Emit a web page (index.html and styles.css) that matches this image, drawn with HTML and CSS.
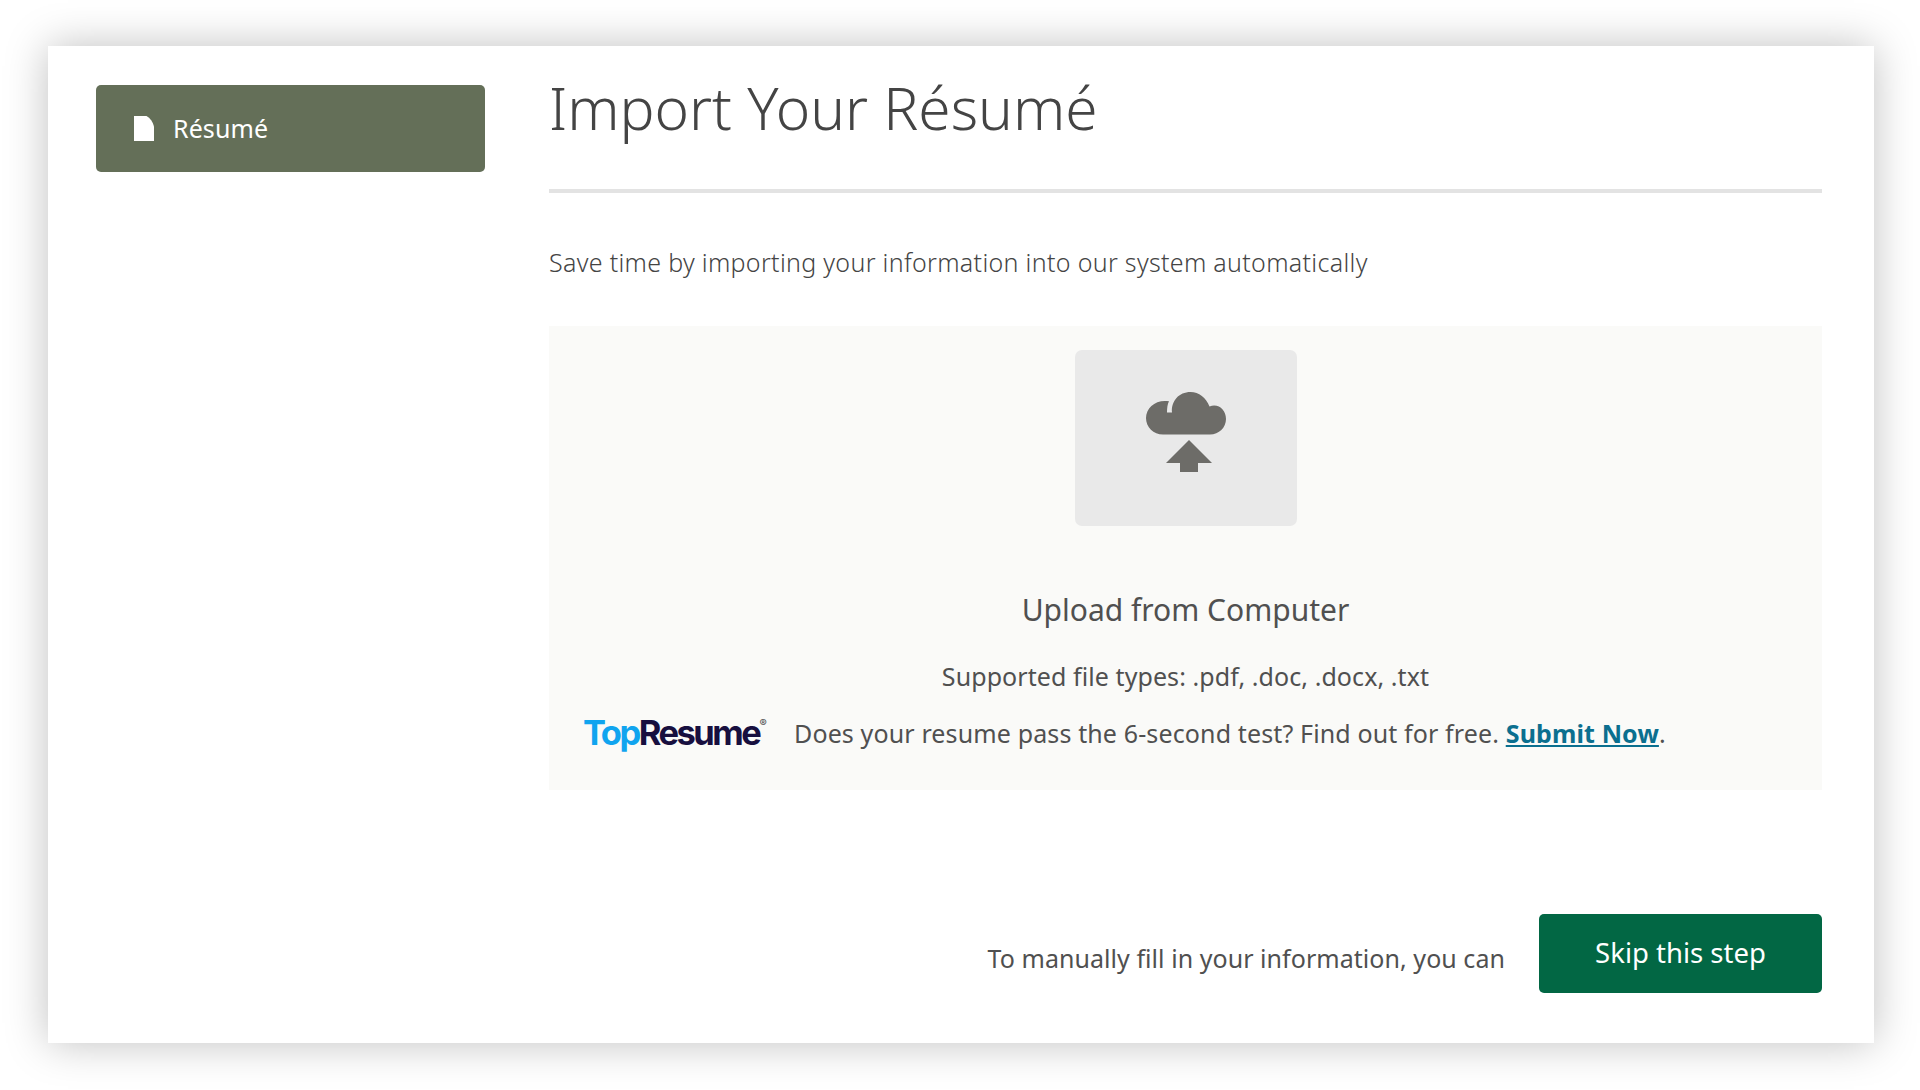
FILE: index.html
```html
<!DOCTYPE html>
<html lang="en">
<head>
<meta charset="utf-8">
<title>Import Your Résumé</title>
<link rel="stylesheet" href="styles.css">
</head>
<body>
<div class="card">
  <aside class="sidebar">
    <a class="nav-item">
      <svg class="doc-icon" viewBox="0 0 20 25" width="20" height="25"><path d="M0 0H12.500C16 2 19 6 20 10.500V25H0Z" fill="#fff"/></svg>
      <span class="nav-label">Résumé</span>
    </a>
  </aside>
  <main class="main">
    <h1 class="title">Import Your Résumé</h1>
    <p class="lead">Save time by importing your information into our system automatically</p>
    <section class="panel">
      <div class="upload-box">
        <svg class="upload-icon" viewBox="0 0 80 80" width="80" height="80">
          <path d="M21 9C9 8 0 16 0 26C0 35 7.500 42.500 17 42.500H64C73 42.500 80 35.500 80 27C80 18 72.500 11 63.500 14.500C60 5.500 53 0 44.500 0C33 0 25 9 26 20.500H21C21 16.500 21.500 12 23 9.300Z" fill="#6d6c68"/>
          <path d="M43 48L66 71H52V80H34V71H20Z" fill="#6d6c68"/>
        </svg>
      </div>
      <h2 class="upload-title">Upload from Computer</h2>
      <p class="types">Supported file types: .pdf, .doc, .docx, .txt</p>
      <div class="promo">
        <span class="logo"><span class="logo-top">Top</span><span class="logo-resume">Resume</span><sup class="logo-reg">®</sup></span>
        <span class="promo-text">Does your resume pass the 6-second test? Find out for free. <a class="promo-link">Submit Now</a>.</span>
      </div>
    </section>
    <footer class="actions">
      <span class="manual">To manually fill in your information, you can</span>
      <a class="skip">Skip this step</a>
    </footer>
  </main>
</div>
</body>
</html>
```
FILE: styles.css
```css
* { box-sizing: border-box; }
html, body { margin: 0; height: 100%; background: #fff; }
body {
  padding: 46px 46px 47px 48px;
  font-family: "Noto Sans", "Open Sans", sans-serif;
  color: #505050;
  overflow: hidden;
}
.card {
  height: 997px;
  background: #fff;
  box-shadow: 0 0 40px rgba(0,0,0,.25);
  display: flex;
  padding: 0 52px 0 48px;
}
.sidebar { width: 389px; flex: none; padding-top: 39px; }
.nav-item {
  display: flex;
  align-items: center;
  gap: 19px;
  height: 87px;
  padding-left: 38px;
  background: #646f58;
  border-radius: 5px;
  color: #fff;
  font-size: 25px;
  letter-spacing: .1px;
}
.nav-label { padding-bottom: 2px; }
.doc-icon { flex: none; }
.main { flex: 1; margin-left: 64px; display: flex; flex-direction: column; }
.title {
  margin: 0;
  height: 147px;
  padding-top: 23px;
  border-bottom: 4px solid #e3e3e3;
  font-size: 58.500px;
  line-height: 76px;
  font-weight: 300;
  color: #444;
}
.lead { margin: 0; padding-top: 52px; height: 133px; font-size: 25px; line-height: 34px; font-weight: 300; letter-spacing: .31px; color: #444; }
.panel {
  height: 464px;
  background: #fafaf8;
  display: flex;
  flex-direction: column;
  align-items: center;
  padding-top: 24px;
}
.upload-box {
  width: 222px;
  height: 176px;
  background: #e9e9e9;
  border-radius: 7px;
  display: flex;
  justify-content: center;
  padding-top: 42px;
}
.upload-title { margin: 64px 0 0; font-size: 30px; line-height: 40px; font-weight: 400; color: #505050; }
.types { margin: 29px 0 0; font-size: 25px; line-height: 34px; font-weight: 400; letter-spacing: .08px; }
.promo { align-self: flex-start; display: flex; align-items: center; margin: 20px 0 0 34px; }
.logo { display: flex; width: 184px; font-family: "Inter", sans-serif; font-weight: 700; font-size: 34.500px; letter-spacing: -2.500px; line-height: 40px; margin-right: 27px; }
.logo-top { color: #10a4ef; }
.logo-resume { color: #170f3f; }
.logo-reg { font-size: 11px; line-height: 14px; letter-spacing: 0; color: #555; margin: 3px 0 0; }
.promo-text { font-size: 25px; line-height: 34px; font-weight: 400; letter-spacing: .13px; }
.promo-link { color: #0b6f8f; font-weight: 700; text-decoration: underline; }
.actions { display: flex; justify-content: flex-end; align-items: flex-start; margin-top: 124px; }
.manual { font-size: 25px; line-height: 34px; font-weight: 400; margin: 27px 34px 0 0; letter-spacing: .05px; }
.skip {
  width: 283px;
  height: 79px;
  display: flex;
  align-items: center;
  justify-content: center;
  padding-bottom: 2px;
  background: #026744;
  border-radius: 5px;
  color: #fff;
  font-size: 27.500px;
}
```
